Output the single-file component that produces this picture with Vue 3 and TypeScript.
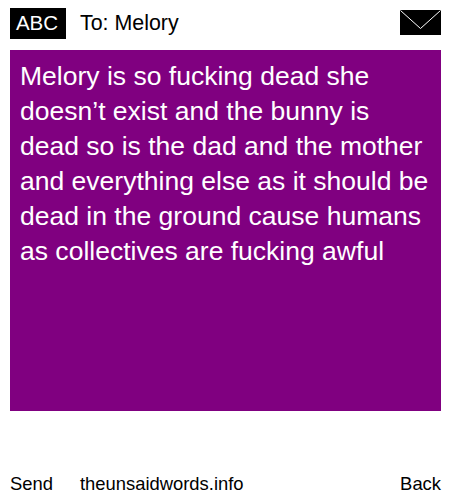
<script setup lang="ts">
const message = "Melory is so fucking dead she doesn’t exist and the bunny is dead so is the dad and the mother and everything else as it should be dead in the ground cause humans as collectives are fucking awful";
</script>

<template>
  <div class="phone">
    <header class="top">
      <span class="abc">ABC</span>
      <span class="to">To: Melory</span>
      <svg class="env" width="41" height="25" viewBox="0 0 41 25">
        <rect width="41" height="25" fill="#000" />
        <path d="M0.5 0.5 L20.5 18.5 L40.5 0.5" fill="none" stroke="#fff" stroke-width="1" />
      </svg>
    </header>
    <main class="msg">{{ message }}</main>
    <footer class="bottom">
      <span class="send">Send</span>
      <span class="site">theunsaidwords.info</span>
      <span class="back">Back</span>
    </footer>
  </div>
</template>

<style scoped>
.phone {
  width: 450px;
  height: 500px;
  box-sizing: border-box;
  padding: 8px 9px 0 10px;
  display: flex;
  flex-direction: column;
  background: #fff;
  color: #000;
  font-family: "Liberation Sans", Arial, sans-serif;
  overflow: hidden;
}
.top {
  display: flex;
  align-items: center;
  height: 31px;
  margin-bottom: 11px;
}
.abc {
  box-sizing: border-box;
  background: #000;
  color: #fff;
  width: 56px;
  height: 31px;
  padding-right: 2px;
  line-height: 30px;
  text-align: center;
  font-size: 20.5px;
}
.to {
  margin-left: 14px;
  font-size: 21.4px;
  line-height: 30px;
  padding-bottom: 1px;
  flex: 1;
}
.env { display: block; margin-bottom: 2px; }
.msg {
  height: 361px;
  box-sizing: border-box;
  background: #800080;
  color: #fff;
  padding: 9px 10px;
  font-size: 26.53px;
  line-height: 35px;
}
.bottom {
  display: flex;
  align-items: center;
  margin-top: 62px;
  font-size: 18.4px;
  line-height: 21px;
}
.site { margin-left: 27px; flex: 1; }
</style>
